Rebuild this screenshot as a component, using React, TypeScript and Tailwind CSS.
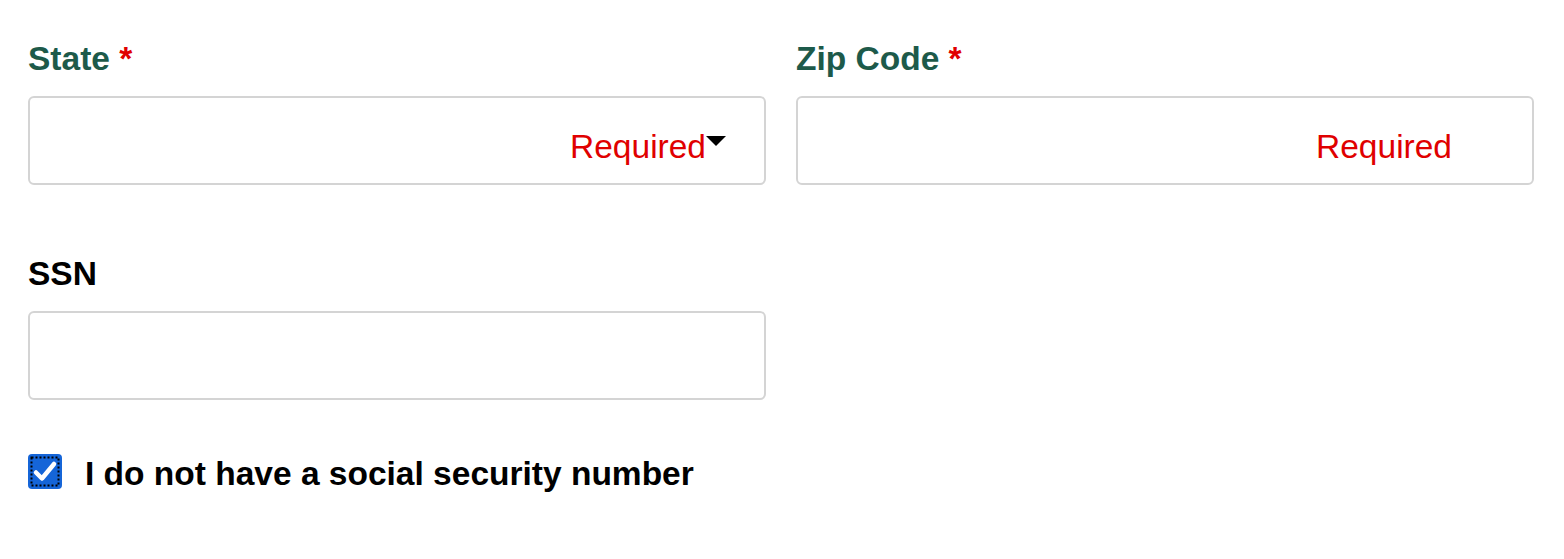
function Caret() {
  return (
    <svg width="20" height="10" viewBox="0 0 20 10" className="mb-[13px] shrink-0">
      <path d="M0 0 H20 L10 10 Z" fill="#000" />
    </svg>
  );
}

function CheckBox() {
  return (
    <svg width="34" height="35" viewBox="0 0 34 35" className="shrink-0">
      <rect x="0" y="0" width="34" height="35" rx="4" fill="#1565d8" />
      <rect x="3.5" y="3.5" width="27" height="28" fill="none" stroke="#000" strokeWidth="2" strokeDasharray="2 2" />
      <path d="M8 18.5 L14 24.5 L26 10" fill="none" stroke="#fff" strokeWidth="4.5" strokeLinecap="round" strokeLinejoin="round" />
    </svg>
  );
}

function Label({ text, required }: { text: string; required?: boolean }) {
  return (
    <label className={`block text-[33.5px] leading-[38px] font-bold ${required ? "text-[#1d5a4a]" : "text-black"}`}>
      {text}
      {required && <span className="text-[#e00000]"> *</span>}
    </label>
  );
}

export default function App() {
  return (
    <div className="min-h-[559px] bg-white pl-[28px] pr-[30px] pt-[40px] font-['Liberation_Sans',Arial,sans-serif]">
      <div className="grid grid-cols-2 gap-x-[30px]">
        <div>
          <Label text="State" required />
          <div className="mt-[18px] flex h-[89px] items-center justify-end rounded-[6px] border-2 border-[#d4d4d4] pr-[38px] pt-[13px]">
            <span className="text-[33.5px] leading-[38px] text-[#e00000]">Required</span>
            <Caret />
          </div>
        </div>
        <div>
          <Label text="Zip Code" required />
          <div className="mt-[18px] flex h-[89px] items-center justify-end rounded-[6px] border-2 border-[#d4d4d4] pr-[80px] pt-[13px]">
            <span className="text-[33.5px] leading-[38px] text-[#e00000]">Required</span>
          </div>
        </div>
      </div>

      <div className="mt-[70px] grid grid-cols-2 gap-x-[30px]">
        <div>
          <Label text="SSN" />
          <div className="mt-[18px] h-[89px] rounded-[6px] border-2 border-[#d4d4d4]" />
        </div>
      </div>

      <div className="mt-[54px] flex items-start gap-[23px]">
        <CheckBox />
        <span className="mt-[1px] text-[33.5px] leading-[38px] font-bold text-black">I do not have a social security number</span>
      </div>
    </div>
  );
}
